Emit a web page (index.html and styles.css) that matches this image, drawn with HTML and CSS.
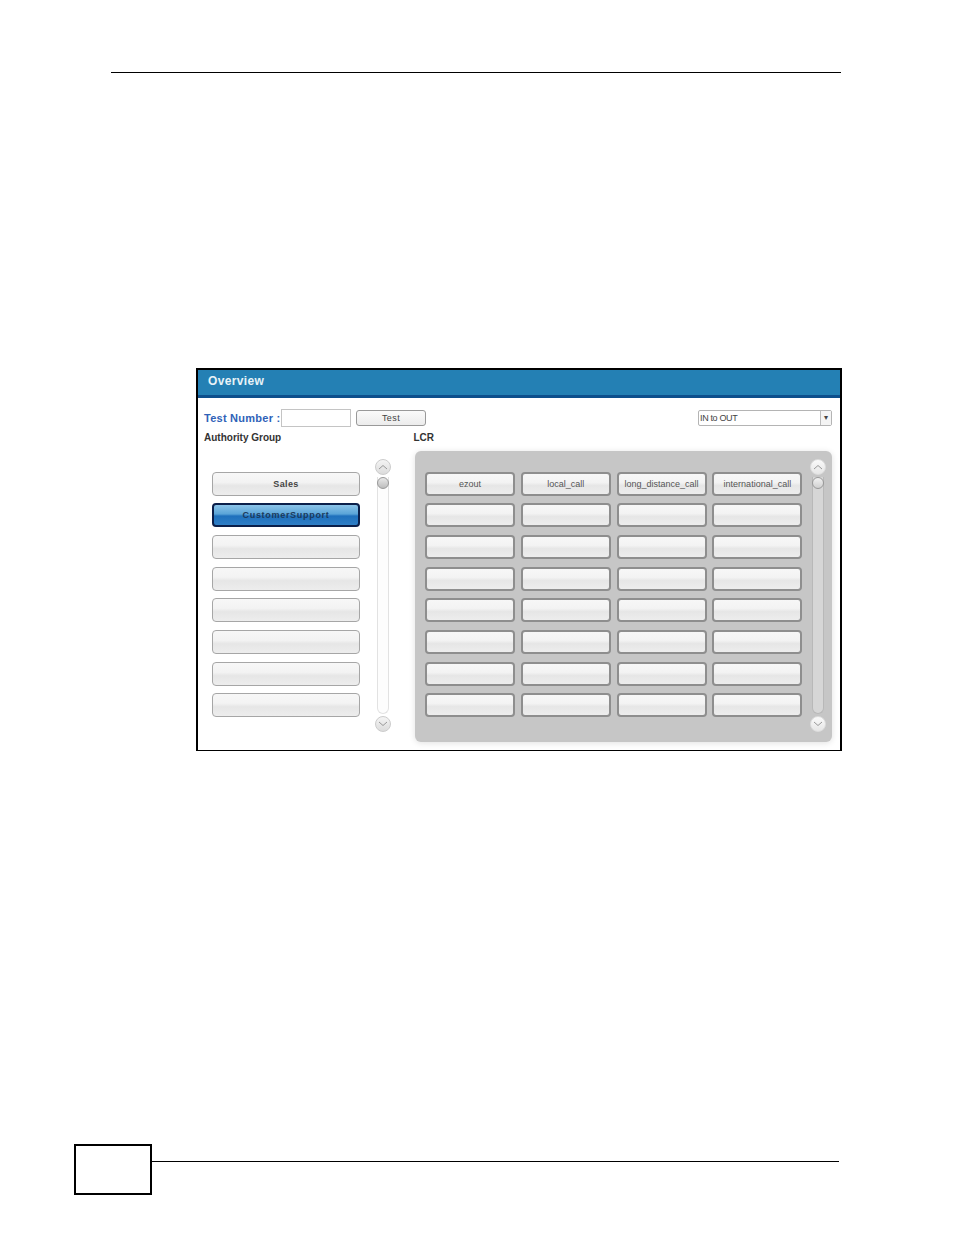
FILE: index.html
```html
<!DOCTYPE html>
<html lang="en">
<head>
    <meta charset="UTF-8">
    <title>Overview</title>
    <link rel="stylesheet" href="styles.css">
</head>
<body>
    <div class="top-rule"></div>

    <div class="frame">
        <div class="title-bar">Overview</div>

        <div class="toolbar">
            <span class="test-label">Test Number :</span>
            <input type="text" class="test-input">
            <button class="test-btn">Test</button>
            <div class="direction">
                <span class="direction-value">IN to OUT</span>
                <span class="direction-arrow">&#9662;</span>
            </div>
        </div>

        <div class="labels">
            <span class="label-group">Authority Group</span>
            <span class="label-lcr">LCR</span>
        </div>

        <div class="content">
            <!-- Authority groups -->
            <div class="group-col">
                <div class="group-list">
                    <button class="btn btn-bold">Sales</button>
                    <button class="btn btn-bold btn-active">CustomerSupport</button>
                    <button class="btn"></button>
                    <button class="btn"></button>
                    <button class="btn"></button>
                    <button class="btn"></button>
                    <button class="btn"></button>
                    <button class="btn"></button>
                </div>
                <div class="scroll">
                    <div class="scroll-btn">
                        <svg width="10" height="6" viewBox="0 0 10 6"><path d="M1 5 L5 1.5 L9 5" fill="none" stroke="#999" stroke-width="1"/></svg>
                    </div>
                    <div class="scroll-track"><div class="scroll-thumb"></div></div>
                    <div class="scroll-btn">
                        <svg width="10" height="6" viewBox="0 0 10 6"><path d="M1 1 L5 4.5 L9 1" fill="none" stroke="#999" stroke-width="1"/></svg>
                    </div>
                </div>
            </div>

            <!-- LCR panel -->
            <div class="lcr-panel">
                <div class="lcr-grid">
                    <button class="btn btn-dark">ezout</button>
                    <button class="btn btn-dark">local_call</button>
                    <button class="btn btn-dark">long_distance_call</button>
                    <button class="btn btn-dark">international_call</button>
                    <button class="btn btn-dark"></button>
                    <button class="btn btn-dark"></button>
                    <button class="btn btn-dark"></button>
                    <button class="btn btn-dark"></button>
                    <button class="btn btn-dark"></button>
                    <button class="btn btn-dark"></button>
                    <button class="btn btn-dark"></button>
                    <button class="btn btn-dark"></button>
                    <button class="btn btn-dark"></button>
                    <button class="btn btn-dark"></button>
                    <button class="btn btn-dark"></button>
                    <button class="btn btn-dark"></button>
                    <button class="btn btn-dark"></button>
                    <button class="btn btn-dark"></button>
                    <button class="btn btn-dark"></button>
                    <button class="btn btn-dark"></button>
                    <button class="btn btn-dark"></button>
                    <button class="btn btn-dark"></button>
                    <button class="btn btn-dark"></button>
                    <button class="btn btn-dark"></button>
                    <button class="btn btn-dark"></button>
                    <button class="btn btn-dark"></button>
                    <button class="btn btn-dark"></button>
                    <button class="btn btn-dark"></button>
                    <button class="btn btn-dark"></button>
                    <button class="btn btn-dark"></button>
                    <button class="btn btn-dark"></button>
                    <button class="btn btn-dark"></button>
                </div>
                <div class="scroll scroll-light">
                    <div class="scroll-btn">
                        <svg width="10" height="6" viewBox="0 0 10 6"><path d="M1 5 L5 1.5 L9 5" fill="none" stroke="#999" stroke-width="1"/></svg>
                    </div>
                    <div class="scroll-track"><div class="scroll-thumb"></div></div>
                    <div class="scroll-btn">
                        <svg width="10" height="6" viewBox="0 0 10 6"><path d="M1 1 L5 4.5 L9 1" fill="none" stroke="#999" stroke-width="1"/></svg>
                    </div>
                </div>
            </div>
        </div>
    </div>

    <div class="page-footer">
        <div class="page-box"></div>
        <div class="page-line"></div>
    </div>
</body>
</html>
```

FILE: styles.css
```css
body {
    margin: 0;
    background-color: #fff;
    font-family: "Liberation Sans", Arial, sans-serif;
    color: #333;
}

.top-rule {
    width: 730px;
    height: 1px;
    margin: 72px 0 0 111px;
    background-color: #000;
}

.frame {
    box-sizing: border-box;
    width: 646px;
    height: 383px;
    margin: 295px 0 0 196px;
    border: 2px solid #000;
    border-bottom-width: 1px;
}

.title-bar {
    box-sizing: border-box;
    height: 28px;
    padding: 4px 0 0 10px;
    background-color: #2480b4;
    border-bottom: 3px solid #0d4f8c;
    color: #e8f3f8;
    font-size: 12px;
    font-weight: bold;
    letter-spacing: 0.35px;
    line-height: 14px;
}

/* Test number row */
.toolbar {
    display: flex;
    align-items: center;
    height: 18px;
    margin-top: 11px;
    padding: 0 8px 0 6px;
}

.test-label {
    width: 77px;
    color: #2f62b8;
    font-size: 11px;
    font-weight: bold;
    letter-spacing: 0.25px;
    white-space: nowrap;
}

.test-input {
    box-sizing: border-box;
    width: 70px;
    height: 18px;
    margin: 0;
    padding: 0;
    border: 1px solid #c4c4c4;
    background-color: #fff;
}

.test-btn {
    box-sizing: border-box;
    width: 70px;
    height: 16px;
    margin-left: 5px;
    padding: 0;
    border: 1px solid #999;
    border-radius: 3px;
    background: linear-gradient(#fafafa, #ececec);
    color: #444;
    font-family: inherit;
    font-size: 9px;
    letter-spacing: 0.4px;
}

.direction {
    box-sizing: border-box;
    display: flex;
    align-items: center;
    justify-content: space-between;
    width: 134px;
    height: 16px;
    margin-left: auto;
    border: 1px solid #b4b4b4;
    border-radius: 2px;
    font-size: 9px;
    color: #444;
}

.direction-value {
    padding-left: 1px;
    letter-spacing: -0.35px;
}

.direction-arrow {
    box-sizing: border-box;
    width: 11px;
    height: 14px;
    border-left: 1px solid #bbb;
    background-color: #f4f4f4;
    font-size: 8px;
    line-height: 14px;
    text-align: center;
}

.labels {
    display: flex;
    height: 12px;
    margin-top: 5px;
    padding-left: 6px;
    color: #333;
    font-size: 10px;
    font-weight: bold;
    line-height: 12px;
}

.label-group {
    width: 209.5px;
}

/* Lists */
.content {
    display: flex;
    margin-top: 7px;
    padding-left: 14px;
}

.group-col {
    display: flex;
    width: 203px;
}

.group-list {
    display: flex;
    flex-direction: column;
    gap: 7.7px;
    width: 148px;
    margin-top: 20.6px;
}

.btn {
    box-sizing: border-box;
    height: 24px;
    padding: 0;
    border: 1px solid #a6a6a6;
    border-radius: 4px;
    background: linear-gradient(#f7f7f7 0%, #f3f3f3 42%, #e6e6e6 58%, #ededed 100%);
    color: #444;
    font-family: inherit;
    font-size: 9px;
    white-space: nowrap;
}

.btn-bold {
    font-weight: bold;
    letter-spacing: 0.4px;
}

.btn-active {
    border: 2px solid #0b1f4a;
    background: linear-gradient(#8cc4e8 0%, #5aa4d8 45%, #1f70bc 55%, #2f7fc6 100%);
    color: #1b3a5c;
    letter-spacing: 0.7px;
}

.btn-dark {
    border: 2px solid #8e8e8e;
    color: #555;
}

.lcr-panel {
    display: flex;
    box-sizing: border-box;
    width: 417px;
    height: 291px;
    padding-left: 10px;
    border-radius: 6px;
    background-color: #c6c6c6;
    box-shadow: 0 1px 6px rgba(0, 0, 0, 0.12);
}

.lcr-grid {
    display: grid;
    grid-template-columns: repeat(4, 90px);
    grid-auto-rows: 24px;
    column-gap: 5.8px;
    row-gap: 7.7px;
    width: 377px;
    margin-top: 20.6px;
}

/* Scrollbars */
.scroll {
    display: flex;
    flex-direction: column;
    align-items: center;
    gap: 2px;
    width: 16px;
    height: 273px;
    margin: 8px 0 0 15px;
}

.scroll-light {
    margin-left: 8px;
}

.scroll-btn {
    display: flex;
    align-items: center;
    justify-content: center;
    box-sizing: border-box;
    width: 16px;
    height: 16px;
    flex: none;
    border: 1px solid #ccc;
    border-radius: 50%;
    background: linear-gradient(#f4f4f4, #dcdcdc);
}

.scroll-track {
    box-sizing: border-box;
    flex: 1;
    width: 12px;
    border: 1px solid #e2e2e2;
    border-top: none;
    border-radius: 0 0 6px 6px;
    background-color: #fdfdfd;
}

.scroll-thumb {
    box-sizing: border-box;
    width: 12px;
    height: 12px;
    margin-left: -1px;
    border: 1px solid #999;
    border-radius: 50%;
    background: linear-gradient(#e8e8e8, #bdbdbd);
}

.scroll-light .scroll-btn {
    border-color: #ddd;
    background: linear-gradient(#fafafa, #e6e6e6);
}

.scroll-light .scroll-track {
    border-color: #b8b8b8;
    background-color: #d6d6d6;
}

.scroll-light .scroll-thumb {
    background: linear-gradient(#f2f2f2, #d0d0d0);
}

/* Page number box */
.page-footer {
    display: flex;
    width: 765px;
    margin: 393px 0 0 74px;
}

.page-box {
    box-sizing: border-box;
    width: 78px;
    height: 51px;
    border: 2px solid #000;
}

.page-line {
    flex: 1;
    height: 1px;
    margin-top: 17px;
    background-color: #000;
}
```
